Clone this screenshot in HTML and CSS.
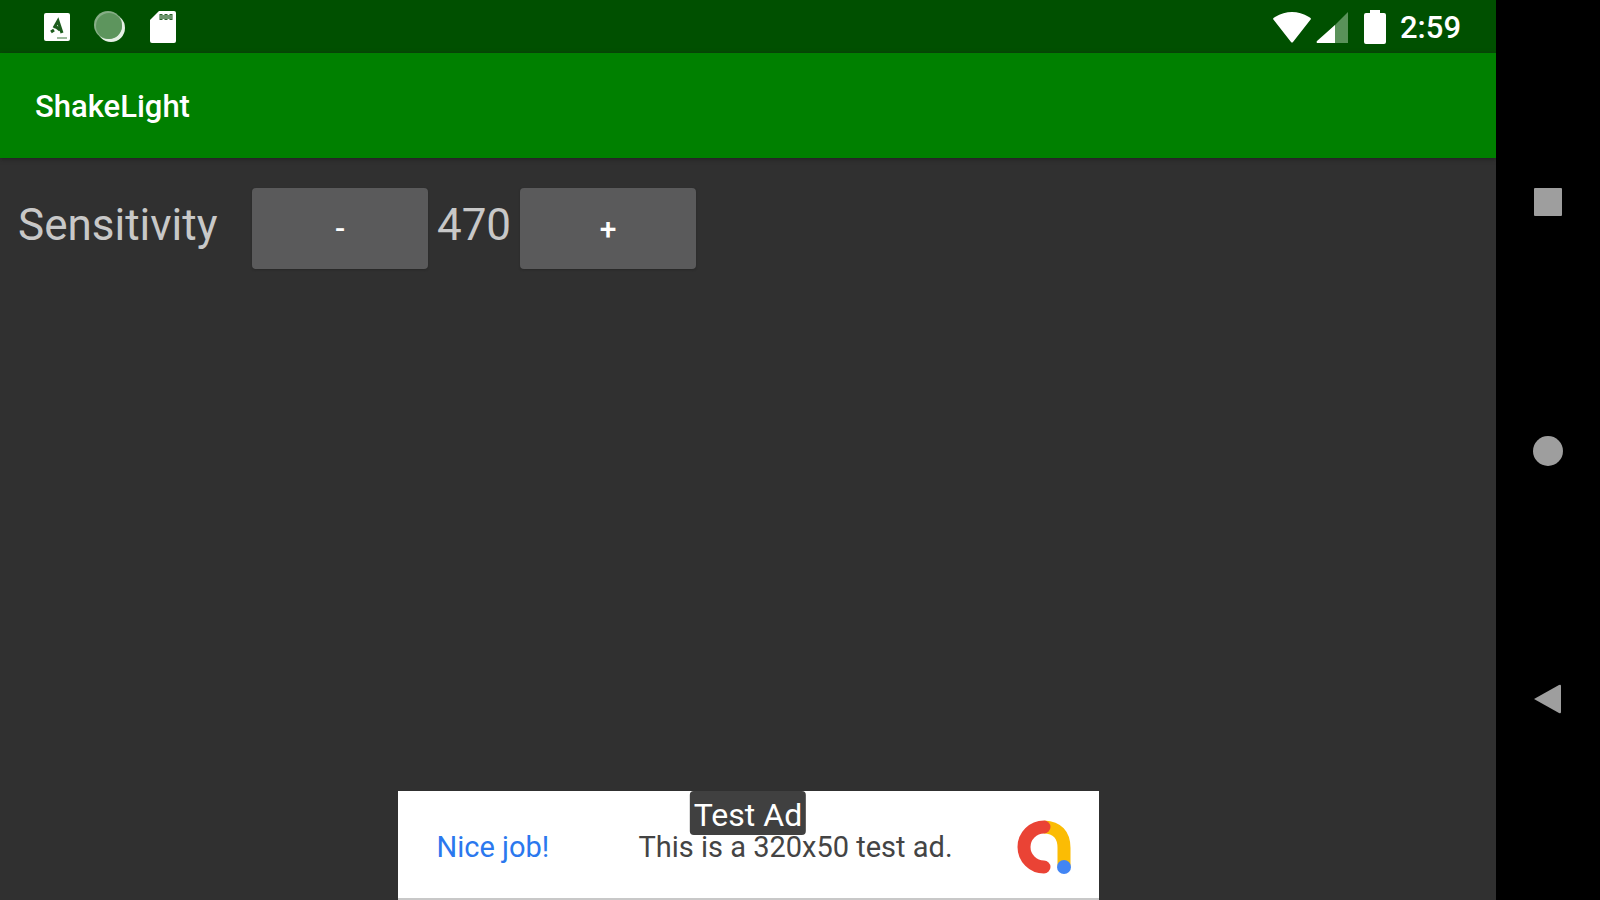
FILE: index.html
```html
<!DOCTYPE html>
<html lang="en">
<head>
<meta charset="utf-8">
<title>ShakeLight</title>
<link rel="stylesheet" href="styles.css">
</head>
<body>
<div class="device">
  <div class="screen">
    <div class="status-bar">
      <div class="notifications">
        <svg width="26" height="28" viewBox="0 0 26 28" aria-hidden="true"><rect width="26" height="28" rx="2" fill="#fff"/><path d="M7 19L10 17M10 15L14 8L18 20M11 13L16 17" fill="none" stroke="#1d5c1d" stroke-width="3"/><path d="M13 25H23" stroke="#9dbb9d" stroke-width="2"/></svg>
        <svg width="32" height="32" viewBox="0 0 32 32" aria-hidden="true"><circle cx="17" cy="17" r="14" fill="#e6f0e6"/><circle cx="14" cy="14" r="14" fill="#86ae86"/><circle cx="15" cy="15" r="13" fill="#5d955d"/></svg>
        <svg width="26" height="34" viewBox="0 0 26 34" aria-hidden="true"><path d="M9 1H24Q26 1 26 3V31Q26 33 24 33H2Q0 33 0 31V10Z" fill="#fff"/><path d="M11 4V10M16 4V10M21 4V10" stroke="#2d632d" stroke-width="3"/><path d="M10 7H22" stroke="#6d946d" stroke-width="4"/></svg>
      </div>
      <div class="indicators">
        <svg width="40" height="32" viewBox="0 0 40 32" aria-hidden="true"><path d="M1 8Q1 7 3 6Q20-4 37 6Q39 7 39 8L21 31Q20 32 19 31Z" fill="#fff"/></svg>
        <svg class="signal" width="32" height="32" viewBox="0 0 32 32" aria-hidden="true"><path d="M32 1V32H1Z" fill="#5a925a"/><path d="M19 14V32H1Q0 31 1 30Z" fill="#fff"/></svg>
        <svg class="battery" width="22" height="34" viewBox="0 0 22 34" aria-hidden="true"><path d="M6 0H16V3H20Q22 3 22 5V32Q22 34 20 34H2Q0 34 0 32V5Q0 3 2 3H6Z" fill="#fff"/></svg>
        <span class="clock">2:59</span>
      </div>
    </div>
    <header class="app-bar"><h1 class="app-title">ShakeLight</h1></header>
    <main class="content">
      <div class="sensitivity">
        <span class="label" id="sens">Sensitivity</span>
        <button class="step" type="button" aria-describedby="sens">-</button>
        <output class="value" aria-labelledby="sens">470</output>
        <button class="step" type="button" aria-describedby="sens">+</button>
      </div>
      <aside class="ad">
        <span class="ad-badge">Test Ad</span>
        <a class="ad-link" href="#">Nice job!</a>
        <span class="ad-text">This is a 320x50 test ad.</span>
        <svg class="ad-logo" width="54" height="54" viewBox="0 0 54 54" aria-hidden="true"><path d="M27 7Q47 8 47 28V46" fill="none" stroke="#fbbc04" stroke-width="13"/><path d="M27 7A20 20 0 0 0 27 47" fill="none" stroke="#ea4335" stroke-width="13" stroke-linecap="round"/><circle cx="47" cy="47" r="7" fill="#4285f4"/></svg>
      </aside>
    </main>
  </div>
  <nav class="nav-bar" aria-label="System">
    <button class="nav-button" type="button" aria-label="Overview"><svg width="30" height="30" viewBox="0 0 30 30"><rect x="1" y="1" width="28" height="28" rx="1" fill="#9e9e9e"/></svg></button>
    <button class="nav-button" type="button" aria-label="Home"><svg width="30" height="30" viewBox="0 0 30 30"><circle cx="15" cy="15" r="15" fill="#9e9e9e"/></svg></button>
    <button class="nav-button" type="button" aria-label="Back"><svg width="30" height="30" viewBox="0 0 30 30"><path d="M1 15L26 1Q28 0 28 2V28Q28 30 26 29Z" fill="#9e9e9e"/></svg></button>
  </nav>
</div>
</body>
</html>
```
FILE: styles.css
```css
* { box-sizing: border-box; }
body { margin: 0; font-family: Roboto, "Liberation Sans", sans-serif; background: #000; }
.device { display: flex; min-height: 100vh; }
.screen { flex: 1; display: flex; flex-direction: column; background: #303030; }
.status-bar { display: flex; justify-content: space-between; align-items: center; height: 53px; padding: 0 35px 0 44px; background: #005000; }
.notifications, .indicators { display: flex; align-items: center; }
.notifications { gap: 24px; }
.signal { margin-left: 4px; }
.battery { margin-left: 16px; }
.clock { margin-left: 14px; padding-top: 2px; color: #fff; font-size: 31px; font-weight: 500; line-height: 36px; }
.app-bar { display: flex; align-items: center; height: 105px; padding: 2px 35px 0; background: #008000; box-shadow: 0 1px 4px #202020; }
.app-title { margin: 0; color: #fff; font-size: 31px; font-weight: 500; line-height: 36px; }
.content { flex: 1; display: flex; flex-direction: column; justify-content: space-between; }
.sensitivity { display: flex; align-items: flex-start; padding: 30px 18px; color: #c8c8c8; font-size: 44px; line-height: 74px; }
.label { width: 234px; }
.step { width: 176px; height: 81px; padding: 0; border: 0; border-radius: 4px; background: #5a5a5b; color: #fff; font: 500 30px/36px Roboto, "Liberation Sans", sans-serif; box-shadow: 0 1px 2px #282828; }
.value { width: 92px; text-align: center; }
.ad { position: relative; display: flex; align-items: center; align-self: center; width: 701px; height: 109px; padding: 4px 28px 0 39px; background: #fff; border-bottom: 2px solid #c8c8c8; font-size: 29px; line-height: 36px; }
.ad-badge { position: absolute; top: 0; left: 50%; transform: translateX(-50%); padding: 6px 4px 2px; border-radius: 4px; background: #404040; color: #fff; font-size: 32px; white-space: nowrap; }
.ad-link { width: 202px; color: #2b78ee; text-decoration: none; }
.ad-text { color: #444; }
.ad-logo { margin-left: auto; }
.nav-bar { display: flex; flex-direction: column; justify-content: space-between; width: 104px; padding: 162px 0 161px; background: #000; }
.nav-button { display: flex; justify-content: center; align-items: center; height: 80px; padding: 0; border: 0; background: none; }
```
